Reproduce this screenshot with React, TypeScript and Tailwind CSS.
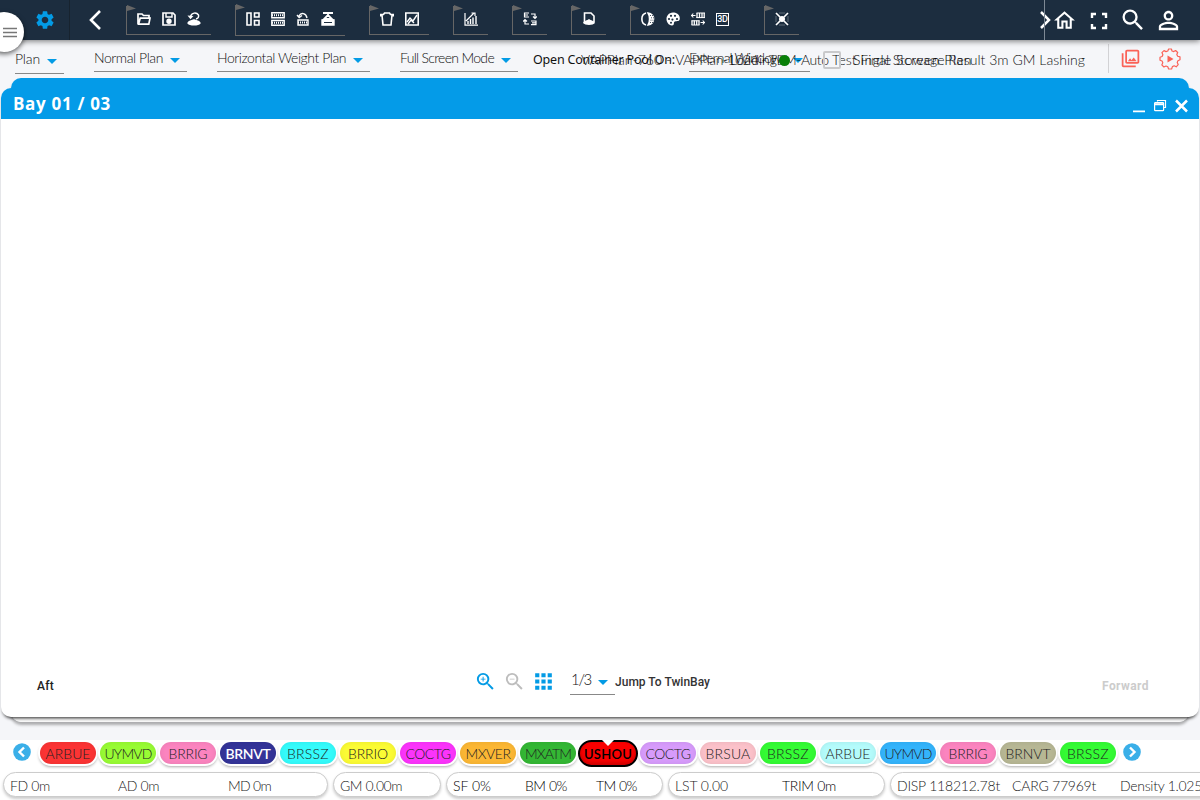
import { useLayoutEffect, useRef } from "react";
import type { ReactNode } from "react";
import { MdSettings, MdSearch, MdOutlineHome, MdPersonOutline, MdZoomIn, MdZoomOut, MdApps, MdOutlinePhotoLibrary } from "react-icons/md";

/* Text stretched to a fixed column width by letter spacing. */
function Fit({ w, className = "", children }: { w: number; className?: string; children: string }) {
  const ref = useRef<HTMLSpanElement>(null);
  useLayoutEffect(() => {
    const el = ref.current;
    if (!el) return;
    el.style.letterSpacing = "0px";
    const natural = el.getBoundingClientRect().width;
    el.style.letterSpacing = `${(w - natural) / children.length}px`;
  }, [w, children]);
  return <span ref={ref} className={`inline-block shrink-0 whitespace-pre ${className}`}>{children}</span>;
}

function Glyph({ children }: { children: ReactNode }) {
  return (
    <span className="flex w-[25px] justify-center">
      <svg width="14" height="14" viewBox="0 0 14 14" fill="none" stroke="white" strokeWidth="1.4">{children}</svg>
    </span>
  );
}

function Group({ tall = false, children }: { tall?: boolean; children: ReactNode }) {
  return (
    <div className={`relative mr-6 flex shrink-0 items-center border-b border-l border-[#666] pr-[5px] pl-[4px] ${tall ? "mt-[5px] h-[31px] pb-[3px]" : "mt-[6px] h-[29px] pb-[2px]"}`}>
      <svg className="absolute top-[-1px] left-0" width="9" height="7" viewBox="0 0 9 7"><path d="M0 0L9 3.5L0 6Z" fill="#666" /></svg>
      {children}
    </div>
  );
}

const Caret = ({ className = "" }: { className?: string }) => (
  <svg className={`shrink-0 ${className}`} width="10" height="5" viewBox="0 0 10 5"><path d="M0 0H10L5 5Z" fill="#039be5" /></svg>
);

function Picker({ label, w, textW, low = false, className = "" }: { label: string; w: string; textW: number; low?: boolean; className?: string }) {
  return (
    <div className={`flex shrink-0 items-center justify-between border-b border-[#888] pr-[7px] text-[14px] font-light text-[#111] ${w} ${low ? "mt-[5px] h-[29px] pb-px" : "mt-[4px] h-[28px]"} ${className}`}>
      <Fit w={textW}>{label}</Fit>
      <Caret className="mt-[5px]" />
    </div>
  );
}

const ports = [
  ["ARBUE", "bg-[#fb3434] text-[#222]", 45], ["UYMVD", "bg-[#98fb34] text-[#222]", 47],
  ["BRRIG", "bg-[#fb84bf] text-[#222]", 39], ["BRNVT", "bg-[#343498] text-white font-semibold", 45],
  ["BRSSZ", "bg-[#34fbfb] text-[#222]", 42], ["BRRIO", "bg-[#fbfb34] text-[#222]", 40],
  ["COCTG", "bg-[#fb34fb] text-[#222]", 45], ["MXVER", "bg-[#fbb734] text-[#222]", 45],
  ["MXATM", "bg-[#34b734] text-[#222]", 46], ["USHOU", "", 48],
  ["COCTG", "bg-[#d79bfb] text-[#222]", 45], ["BRSUA", "bg-[#fbc1c9] text-[#222]", 45],
  ["BRSSZ", "bg-[#34fb34] text-[#222]", 42], ["ARBUE", "bg-[#b4fbfb] text-[#222]", 45],
  ["UYMVD", "bg-[#34b4fb] text-[#222]", 47], ["BRRIG", "bg-[#fb84bf] text-[#222]", 39],
  ["BRNVT", "bg-[#b7b794] text-[#222]", 45], ["BRSSZ", "bg-[#34fb34] text-[#222]", 42],
] as const;

function Port({ name, look, w }: { name: string; look: string; w: number }) {
  if (name === "USHOU") {
    return (
      <div className="relative -mx-[2px] flex h-[27px] w-[60px] shrink-0 items-center justify-center rounded-full border-2 border-black bg-[#f90000] pt-[3px] text-[13px] font-semibold text-black shadow-[inset_0_-2px_4px_#c00000]">
        <Fit w={w}>{name}</Fit>
        <svg className="absolute top-[-2px] left-[22px]" width="12" height="6"><path d="M0 0H12L6 6Z" fill="white" /></svg>
      </div>
    );
  }
  return (
    <div className={`-mt-px flex h-[22px] w-[56px] shrink-0 items-center justify-center rounded-full text-[14px] font-light shadow-[0_0_0_2px_white,0_2px_3px_1px_#aaa,inset_0_0_5px_rgba(0,0,0,0.08)] ${look}`}>
      <Fit w={w}>{name}</Fit>
    </div>
  );
}

const Arrow = ({ right = false }: { right?: boolean }) => (
  <svg className="shrink-0" width="18" height="18" viewBox="0 0 18 18"><circle cx="9" cy="9" r="8.8" fill="#3aafe8" /><path d={right ? "M7 4.5L11.5 9L7 13.5" : "M11 4.5L6.5 9L11 13.5"} stroke="white" strokeWidth="2.4" fill="none" /></svg>
);

const pill = "flex h-[25px] shrink-0 items-center rounded-full border border-[#ccc] bg-white pt-px text-[14px] font-light shadow-[0_2px_3px_#ccc]";

export default function App() {
  return (
    <div className="relative flex h-[800px] w-[1200px] flex-col overflow-hidden bg-[#f5f6f9] font-['Lato','Open_Sans',sans-serif]">
      <header className="relative z-10 flex h-10 shrink-0 bg-[#1c2d3f] shadow-[0_1px_6px_rgba(0,0,0,0.55)]">
        <div className="flex w-[70px] items-center border-r border-[#17232f] pl-[34px]"><MdSettings size={22} color="#039be5" className="shrink-0" /></div>
        <div className="flex w-[56px] items-center pl-[18px]"><svg width="14" height="22" viewBox="0 0 14 22" fill="none" stroke="white" strokeWidth="2.6"><path d="M12 2L3 11L12 20" /></svg></div>
        <Group>
          <Glyph><path d="M1 12V2H5L6.5 3.5H12V6M1.5 12.2L3.2 6.2H13L11.8 12.2Z" strokeWidth="1.7" /></Glyph>
          <Glyph><path d="M1 1H11L13 3V13H1Z" strokeWidth="1.7" /><path d="M4 1V5H10V1" /><circle cx="7" cy="9.2" r="2" fill="white" /></Glyph>
          <Glyph><path d="M1 11C2 8.5 5 9 7 8C9 9 12 8.5 13 11C11 13.5 3 13.5 1 11Z" fill="white" /><path d="M3.5 4.5C4.5 .5 9.5 0 11.5 3C12 5 11 6.5 9 7" /><path d="M.5 3.5L3.5 7.2L6.5 4Z" fill="white" stroke="none" /></Glyph>
        </Group>
        <Group tall>
          <Glyph><path d="M1 1H5V13H1ZM8.5 1H13V5H8.5ZM8.5 8.5H13V13H8.5Z" strokeWidth="1.6" /></Glyph>
          <Glyph><path d="M.8 .8H13.2V5.7H.8ZM.8 8.5H13.2V13.2H.8Z" /><path d="M1 3.3H13M1 10.8H13" strokeWidth="2" strokeDasharray="1 1" /></Glyph>
          <Glyph><path d="M2 8H12V13H2Z" /><path d="M2 10.5H12" strokeWidth="2" strokeDasharray="1 1" /><path d="M3 4C5 0 10 1 11 6M1 3L3.2 5.5L6 3.5" /></Glyph>
          <Glyph><path d="M2 1H12M7 1V3M7 3L3 7H11Z" strokeWidth="1.8" /><path d="M1 8H13V13H1Z" fill="white" /><path d="M3 10.5H11" stroke="#1c2d3f" strokeWidth="1" /></Glyph>
        </Group>
        <Group>
          <Glyph><path d="M.8 4.5V2.5H3.5L4.5 1H9.5L10.5 2.5H13.2V4.5M2 3L3 13H11L12 3" strokeWidth="1.6" /></Glyph>
          <Glyph><path d="M.8 1H13.2V13H.8Z" strokeWidth="1.6" /><path d="M2 10L5 6L8 9L12 3M3 12L6 8L9 11" /></Glyph>
        </Group>
        <Group><Glyph><path d="M1 1V13.2H14M2 9L10 1M7.5 1H11V4" strokeWidth="1.2" /><path d="M4 12V9M6.5 12V7M9 12V5.5M12 12V4" strokeWidth="1.4" /></Glyph></Group>
        <Group><Glyph><path d="M6 1H1.5V5H6M1.5 3H5M8 2H12V6M10 4.5L12 6.5L14 4.5M8 9H13V12.7H8M13 10.8H9M6 12H2V8M0 9.5L2 7.5L4 9.5" strokeWidth="1.2" /></Glyph></Group>
        <Group><Glyph><path d="M2.5 10V1H9L12 4V10" strokeWidth="1.6" /><path d="M1 11C2 8 5 9 7 7C9 9 12 8 13 11C11 13.5 3 13.5 1 11Z" fill="white" stroke="none" /></Glyph></Group>
        <Group>
          <Glyph><path d="M5 1C-.5 2.5-.5 11.5 5 13" strokeWidth="1.6" /><path d="M7 1C9 4 9 10 7 13C14.5 12.5 14.5 1.5 7 1Z" fill="white" /><path d="M9 3.5H12M10 5.8H13M9.5 8.2H13M9 10.5H12" stroke="#1c2d3f" strokeWidth=".8" strokeDasharray="1 1" /></Glyph>
          <Glyph><path d="M7 .5C-2 1-1 13 6 13.5C9 13.5 7 10 9 9.5C11 9 14 10 13.8 6C13.5 2 10 .5 7 .5Z" fill="white" stroke="none" /><g fill="#1c2d3f" stroke="none"><circle cx="3" cy="7" r="1.1" /><circle cx="5" cy="3.8" r="1.1" /><circle cx="9" cy="3.8" r="1.1" /><circle cx="11" cy="7" r="1.1" /><circle cx="6.4" cy="7.6" r="1.1" /><circle cx="5" cy="10.7" r="1" /></g></Glyph>
          <Glyph><path d="M6 1V6M8.5 1V6M11 1V6M13.2 1V6M1 8.5V13M3.3 8.5V13M5.7 8.5V13M8 8.5V13" strokeWidth="1.3" /><path d="M5.5 1H14M5.5 5.6H14M.5 8.8H8.6M.5 13H8.6" strokeWidth="1" /><path d="M0 3.5H4.5M2.3 1.5L.5 3.5L2.3 5.5M9.5 10.5H14M11.7 8.5L13.5 10.5L11.7 12.5" strokeWidth="1.1" /></Glyph>
          <span className="flex w-[25px] justify-center"><span className="flex h-[13px] w-[13px] items-center justify-center border border-white font-['Roboto'] text-[9px] leading-none font-medium tracking-[-0.3px] text-white">3D</span></span>
        </Group>
        <Group><Glyph><path d="M1 1L5 5M13 1L9 5M1 13L5 9M13 13L9 9" strokeWidth="1.7" /><circle cx="7" cy="7" r="3" fill="white" stroke="none" /><path d="M4 1H10M4 13H10M1 4V10M13 4V10" strokeWidth=".6" strokeOpacity=".5" /></Glyph></Group>
        <div className="ml-auto flex items-center">
          <div className="relative flex h-full w-[14px] items-center">
            <svg width="14" height="20" viewBox="0 0 14 20" fill="none" stroke="white" strokeWidth="2.5"><path d="M2 2L10 10L2 18" /></svg>
            <span className="absolute top-0 left-[5px] h-10 w-px bg-[#7e8995]" />
          </div>
          <MdOutlineHome size={25} color="white" className="mr-[9px] -ml-px" />
          <svg className="mt-px mr-[11px] ml-[4px]" width="18" height="18" viewBox="0 0 18 18" fill="none" stroke="white" strokeWidth="2.4"><path d="M2 6V2H6M12 2H16V6M16 12V16H12M6 16H2V12" /></svg>
          <MdSearch size={28} color="white" className="mr-[7px] ml-0" />
          <MdPersonOutline size={29} color="white" className="mr-[17px] ml-0" />
        </div>
        <div className="absolute top-3 left-[-16px] flex h-10 w-10 items-center justify-end rounded-full bg-white pr-[7px] shadow-[0_2px_5px_rgba(0,0,0,0.6)]">
          <svg width="14" height="11" viewBox="0 0 14 11"><path d="M0 1.5H14M0 5.5H14M0 9.5H14" stroke="#777" strokeWidth="1.4" /></svg>
        </div>
      </header>
      <div className="relative flex h-[38px] shrink-0 items-start pl-[15px]">
        <Picker label="Plan" w="w-[49px]" textW={25} low />
        <Picker label="Normal Plan" w="w-[93px]" textW={69} className="ml-[30px]" />
        <Picker label="Horizontal Weight Plan" w="w-[153px]" textW={129} className="ml-[30px]" />
        <Picker label="Full Screen Mode" w="w-[118px]" textW={94} className="ml-[30px]" />
        <Picker label="External Window" w="w-[121px]" textW={92} className="ml-[171px]" />
        <div className="absolute top-[11px] left-[533px] text-[12.5px] leading-[17px] text-[#111]"><Fit w={142} className="font-['Noto_Sans']">Open Container Pool On:</Fit></div>
        <div className="absolute top-[11px] left-[581px] flex text-[14px] leading-[17px] font-light text-[#111]">
          <Fit w={94}>VAPPlan-760 - </Fit><Fit w={126}>VAPPlan-1024 - TEM-</Fit><Fit w={31}>Auto </Fit><Fit w={253}>Test Final Stowage Result 3m GM Lashing</Fit>
        </div>
        <div className="absolute top-[11px] left-[730px] text-[14px] leading-[17px] font-light text-black"><Fit w={47}>Loading</Fit></div>
        <span className="absolute top-[15px] left-[779px] h-[11px] w-[11px] rounded-full bg-[#087f08]" />
        <span className="absolute top-[11px] left-[823px] h-[18px] w-[18px] rounded-[2px] border-2 border-[#c9c9cb]" />
        <div className="absolute top-[11px] left-[853px] text-[14px] leading-[17px] font-light text-black"><Fit w={119}>Single Screen Plan</Fit></div>
        <div className="mt-[4px] mr-[19px] ml-auto flex h-[29px] items-center border-l border-[#d2d2d5] pl-[11px]">
          <MdOutlinePhotoLibrary size={21} color="#fa6257" />
          <svg className="ml-[18px]" width="22" height="22" viewBox="0 0 22 22" fill="none" stroke="#fa6257">
            <path d="M9.6 1H12.4L13 3L14.8 3.6L16.6 2.5L18.7 4.5L17.8 6.4L18.7 8.2L21 8.9V11.8L18.9 12.7L18.2 14.6L19.2 16.6L17.2 18.8L15.2 17.8L13.4 18.6L12.6 21H9.6L8.8 18.7L7 18L4.9 19L2.8 16.9L3.8 14.8L3.1 13L1 12.2V9.2L3.1 8.5L3.9 6.7L2.9 4.6L5 2.6L7 3.6L8.8 3Z" strokeWidth="1.2" strokeLinejoin="round" />
            <path d="M8.5 7.5L14.5 11L8.5 14.5Z" fill="#fa6257" stroke="none" />
          </svg>
        </div>
      </div>
      <div className="mr-[11px] ml-[11px] h-[644px] shrink-0 rounded-[10px] bg-[linear-gradient(#049be8_60px,#fafafa_60px)] shadow-[0_3px_3px_rgba(0,0,0,0.3)]" />
      <main className="relative mx-px -mt-[634px] h-[629px] shrink-0 rounded-[10px] bg-white shadow-[0_3px_3px_-1px_rgba(0,0,0,0.45),0_5px_2px_-4px_rgba(0,0,0,0.3)]">
        <div className="flex h-full flex-col overflow-hidden rounded-[10px]">
          <div className="flex h-[31px] shrink-0 items-center bg-[#049be8] pr-[10px] pl-[12px] text-white">
            <Fit w={98} className="pt-px font-['Open_Sans'] text-[17px] leading-5 font-bold">Bay 01 / 03</Fit>
            <svg className="mt-[4px] ml-auto" width="56" height="14" viewBox="0 0 56 14" fill="none" stroke="white">
              <path d="M0 12.3H12" strokeWidth="1.8" />
              <path d="M24.5 2.5V1.5H32.5V8.5H30.5" strokeWidth="1.2" /><rect x="21.6" y="3.7" width="9" height="8" rx=".8" strokeWidth="1.2" /><path d="M21.5 5.2H31" strokeWidth="2" />
              <path d="M43 1.5L54 12.5M54 1.5L43 12.5" strokeWidth="2.5" />
            </svg>
          </div>
          <div className="mt-auto flex h-[65px] shrink-0 items-start pl-9">
            <Fit w={17} className="mt-[25px] font-['Roboto'] text-[12px] leading-[18px] font-medium text-[#222]">Aft</Fit>
            <MdZoomIn size={23} color="#039be5" className="mt-[18px] ml-[420px]" />
            <MdZoomOut size={23} color="#bdbdbd" className="mt-[18px] ml-[6px]" />
            <MdApps size={25} color="#039be5" className="mt-[17px] ml-[5px]" />
            <div className="mt-[13px] ml-[14px] flex h-[30px] w-[45px] items-center justify-between border-b border-[#888] pr-[7px] pl-px text-[15px] font-light text-[#111]"><Fit w={20}>1/3</Fit><Caret className="mt-[5px]" /></div>
            <Fit w={95} className="mt-[21px] font-['Roboto'] text-[12px] leading-[18px] font-medium text-[#333]">Jump To TwinBay</Fit>
            <Fit w={47} className="mt-[25px] mr-[50px] ml-auto font-['Roboto'] text-[12px] leading-[18px] font-bold text-[#ccc]">Forward</Fit>
          </div>
        </div>
      </main>
      <footer className="mt-[23px] flex h-[60px] shrink-0 flex-col bg-white">
        <div className="flex h-[27px] items-center pl-[13px]">
          <span className="mr-[9px] -mt-[3px]"><Arrow /></span>
          <div className="flex h-[27px] items-center gap-1">
            {ports.map(([name, look, w], i) => <Port key={i} name={name} look={look} w={w} />)}
          </div>
          <span className="-mt-[3px] ml-[7px]"><Arrow right /></span>
        </div>
        <div className="mt-[5px] flex pl-[3px]">
          <div className={`${pill} mr-[5px] w-[325px] pl-[6px] text-[#222]`}><Fit w={40}>FD 0m</Fit><Fit w={41} className="ml-[68px]">AD 0m</Fit><Fit w={43} className="ml-[69px]">MD 0m</Fit></div>
          <div className={`${pill} mr-[5px] w-[108px] pl-[6px] text-[#222]`}><Fit w={62}>GM 0.00m</Fit></div>
          <div className={`${pill} mr-[5px] w-[217px] pl-[6px] text-black`}><Fit w={38}>SF 0%</Fit><Fit w={42} className="ml-[34px]">BM 0%</Fit><Fit w={41} className="ml-[29px]">TM 0%</Fit></div>
          <div className={`${pill} mr-[5px] w-[217px] pl-[6px] text-[#222]`}><Fit w={53}>LST 0.00</Fit><Fit w={54} className="ml-[54px] text-black">TRIM 0m</Fit></div>
          <div className={`${pill} w-[330px] pl-[6px] text-[#222]`}><Fit w={103}>DISP 118212.78t</Fit><Fit w={84} className="ml-[12px]">CARG 77969t</Fit><Fit w={82} className="ml-[24px]">Density 1.025</Fit></div>
        </div>
      </footer>
    </div>
  );
}
